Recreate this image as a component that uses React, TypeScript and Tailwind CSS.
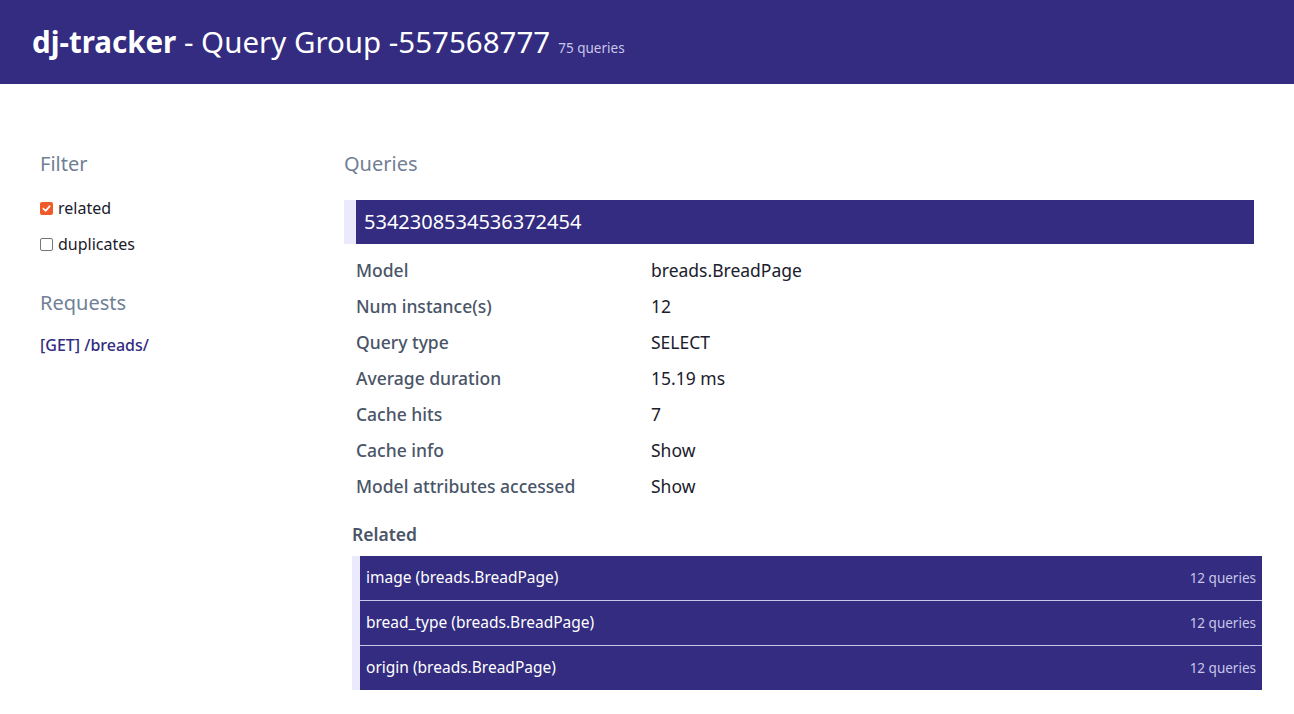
import React from "react";

const font = { fontFamily: '"Noto Sans", "Open Sans", sans-serif' };

const fields: [string, string][] = [
  ["Model", "breads.BreadPage"],
  ["Num instance(s)", "12"],
  ["Query type", "SELECT"],
  ["Average duration", "15.19 ms"],
  ["Cache hits", "7"],
  ["Cache info", "Show"],
  ["Model attributes accessed", "Show"],
];

const related = [
  "image (breads.BreadPage)",
  "bread_type (breads.BreadPage)",
  "origin (breads.BreadPage)",
];

const Check: React.FC<{ on?: boolean }> = ({ on }) =>
  on ? (
    <span className="w-[13px] h-[13px] rounded-[2px] bg-[#f05a28] flex items-center justify-center">
      <svg width="9" height="9" viewBox="0 0 10 10" fill="none">
        <path d="M1.5 5.2 L4 7.6 L8.6 2.4" stroke="white" strokeWidth="1.8" strokeLinecap="round" strokeLinejoin="round" />
      </svg>
    </span>
  ) : (
    <span className="w-[13px] h-[13px] rounded-[2px] border border-[#767676] bg-white" />
  );

const App: React.FC = () => {
  return (
    <div style={font} className="min-h-screen bg-white">
      <header className="h-[84px] bg-[#332c80] flex items-center px-8">
        <h1 className="text-white text-[29.5px] leading-none">
          <span className="font-bold">dj-tracker</span> - Query Group -557568777
          <span className="ml-2 text-[13.5px] text-[#c9c6ea]">75 queries</span>
        </h1>
      </header>

      <div className="flex pt-[66px] pl-10 pr-8">
        <aside className="w-[304px] shrink-0">
          <h2 className="text-[20px] text-[#718096] leading-[28px]">Filter</h2>
          <div className="mt-[21px] flex flex-col gap-[18px] text-[16px] text-[#1a202c]">
            <label className="flex items-center gap-[5px] h-[18px]">
              <Check on />
              related
            </label>
            <label className="flex items-center gap-[5px] h-[18px]">
              <Check />
              duplicates
            </label>
          </div>
          <h2 className="mt-[36px] text-[20px] text-[#718096] leading-[28px]">Requests</h2>
          <a className="mt-[16px] block text-[16px] font-medium text-[#332c80]">[GET] /breads/</a>
        </aside>

        <main className="flex-1">
          <h2 className="text-[20px] text-[#718096] leading-[28px]">Queries</h2>
          <div className="mt-[22px] mr-[8px] h-[44px] bg-[#332c80] border-l-[12px] border-[#ebe9fc] flex items-center pl-2">
            <span className="text-white text-[20px]">5342308534536372454</span>
          </div>
          <div className="mt-[8px] pl-3">
            {fields.map(([k, v]) => (
              <div key={k} className="flex h-[36px] items-center text-[17.5px]">
                <span className="w-[295px] font-medium text-[#4a5568]">{k}</span>
                <span className="text-[#1a202c]">{v}</span>
              </div>
            ))}
          </div>
          <h3 className="mt-[18px] pl-2 text-[17.5px] font-semibold text-[#4a5568] leading-[24px]">Related</h3>
          <div className="mt-[10px] ml-2 border-l-[8px] border-[#ebe9fc] flex flex-col gap-px bg-[#c9c6ea]">
            {related.map((r) => (
              <div key={r} className="h-[44px] bg-[#332c80] flex items-center justify-between pl-[6px] pr-[6px]">
                <span className="text-white text-[15.5px]">{r}</span>
                <span className="text-[#c9c6ea] text-[13.5px]">12 queries</span>
              </div>
            ))}
          </div>
        </main>
      </div>
    </div>
  );
};

export default App;
